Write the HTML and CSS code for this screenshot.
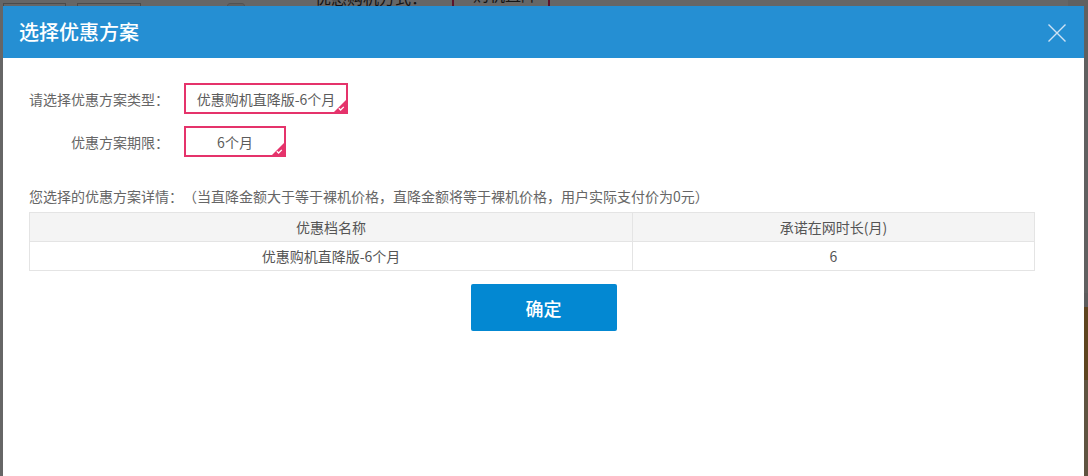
FILE: index.html
```html
<!DOCTYPE html>
<html lang="zh-CN">
<head>
<meta charset="utf-8">
<title>选择优惠方案</title>
<link rel="stylesheet" href="styles.css">
</head>
<body>
<div class="page">
  <div class="page-main">
    <div class="page-top">
      <div class="pg-box pg-box1"></div>
      <div class="pg-box pg-box2"></div>
      <div class="pg-chip"></div>
      <div class="pg-label">优惠购机方式：</div>
      <div class="pg-select">购机直降</div>
    </div>
  </div>
  <div class="page-side">
    <div class="side-gray"></div>
    <div class="side-orange"></div>
    <div class="side-sand"></div>
  </div>
</div>
<div class="mask"></div>
<div class="dialog">
  <div class="dialog-head">
    <h1 class="dialog-title">选择优惠方案</h1>
    <span class="dialog-close" aria-label="关闭">
      <svg width="18" height="18" viewBox="0 0 18 18"><path d="M0.5 0.5 L17.5 17.5 M17.5 0.5 L0.5 17.5" stroke="#cfe3f4" stroke-width="1.4" fill="none"/></svg>
    </span>
  </div>
  <div class="dialog-body">
    <div class="form-row">
      <div class="form-label">请选择优惠方案类型：</div>
      <div class="select select-wide">优惠购机直降版-6个月
        <svg class="select-corner" width="12" height="12" viewBox="0 0 12 12"><polygon points="12,0 12,12 0,12" fill="#e5336b"/><polyline points="4.8,8.3 6.6,10 9.8,6.9" stroke="#fff" stroke-width="1.3" fill="none"/></svg>
      </div>
    </div>
    <div class="form-row">
      <div class="form-label">优惠方案期限：</div>
      <div class="select select-narrow">6个月
        <svg class="select-corner" width="12" height="12" viewBox="0 0 12 12"><polygon points="12,0 12,12 0,12" fill="#e5336b"/><polyline points="4.8,8.3 6.6,10 9.8,6.9" stroke="#fff" stroke-width="1.3" fill="none"/></svg>
      </div>
    </div>
    <p class="note">您选择的优惠方案详情：（当直降金额大于等于裸机价格，直降金额将等于裸机价格，用户实际支付价为0元）</p>
    <table class="detail">
      <thead>
        <tr><th class="col-name">优惠档名称</th><th>承诺在网时长(月)</th></tr>
      </thead>
      <tbody>
        <tr><td>优惠购机直降版-6个月</td><td>6</td></tr>
      </tbody>
    </table>
    <div class="actions">
      <button class="btn-ok" type="button">确定</button>
    </div>
  </div>
</div>
</body>
</html>
```
FILE: styles.css
```css
html, body {
  margin: 0;
  padding: 0;
  height: 476px;
  overflow: hidden;
}
body {
  background: #fff;
  font-family: "Noto Sans CJK SC", "Liberation Sans", sans-serif;
  text-spacing-trim: space-all;
}
.page {
  display: flex;
  height: 476px;
}
.page-main {
  flex: 1;
}
.page-top {
  display: flex;
  align-items: flex-start;
  height: 40px;
}
.pg-box {
  margin-top: 3px;
  height: 30px;
  border: 1px solid #bbb;
  box-sizing: border-box;
}
.pg-box1 {
  margin-left: 3px;
  width: 63px;
}
.pg-box2 {
  margin-left: 11px;
  width: 64px;
}
.pg-chip {
  margin-left: 86px;
  margin-top: 3px;
  width: 18px;
  height: 20px;
  border-radius: 3px;
  background: #eee;
  border: 1px solid #ccc;
  box-sizing: border-box;
}
.pg-label {
  margin-left: 70px;
  margin-top: -13px;
  font-size: 16px;
  line-height: 20px;
  color: #333;
}
.pg-select {
  margin-left: 25px;
  margin-top: -18px;
  width: 98px;
  height: 26px;
  border: 2px solid #e5336b;
  box-sizing: border-box;
  font-size: 16px;
  line-height: 20px;
  color: #333;
  padding-left: 19px;
}
.page-side {
  width: 20px;
  display: flex;
  flex-direction: column;
}
.side-gray {
  height: 307px;
  background: linear-gradient(#f0f0f0 0, #f0f0f0 293px, #e6e6e6 293px);
}
.side-orange {
  height: 73px;
  background: #ecab4f;
}
.side-sand {
  flex: 1;
  background: #eed0a0;
}
.mask {
  position: fixed;
  inset: 0;
  background: rgba(0, 0, 0, 0.6);
}
.dialog {
  position: fixed;
  left: 3px;
  top: 6px;
  width: 1081px;
  bottom: -20px;
  background: #fff;
}
.dialog-head {
  height: 52px;
  background: #258fd3;
  display: flex;
  align-items: center;
  justify-content: space-between;
  padding: 0 18px 0 16px;
}
.dialog-title {
  margin: 0;
  font-size: 20px;
  font-weight: 500;
  color: #fff;
  line-height: 28px;
}
.dialog-close {
  display: flex;
  width: 18px;
  height: 18px;
  margin-top: 2px;
}
.dialog-body {
  padding: 25px 0 0 26px;
}
.form-row {
  display: flex;
  align-items: center;
  gap: 15px;
  margin-bottom: 12px;
}
.form-label {
  width: 140px;
  text-align: right;
  font-size: 14px;
  color: #666;
  white-space: nowrap;
}
.select {
  position: relative;
  height: 31px;
  box-sizing: border-box;
  border: 2px solid #e5336b;
  display: flex;
  align-items: center;
  justify-content: center;
  font-size: 14px;
  color: #5c5c5c;
}
.select-wide {
  width: 164px;
}
.select-narrow {
  width: 102px;
}
.select-corner {
  position: absolute;
  right: 0;
  bottom: 0;
}
.note {
  margin: 29px 0 6px;
  font-size: 14px;
  line-height: 20px;
  color: #666;
}
.detail {
  width: 1006px;
  border-collapse: collapse;
  font-size: 14px;
  color: #555;
}
.detail th,
.detail td {
  border: 1px solid #e4e4e4;
  height: 28px;
  padding: 0;
  text-align: center;
  font-weight: normal;
}
.detail th {
  background: #f4f4f4;
}
.col-name {
  width: 602px;
}
.actions {
  display: flex;
  justify-content: center;
  padding-right: 26px;
  margin-top: 13px;
}
.btn-ok {
  width: 146px;
  height: 47px;
  border: 0;
  border-radius: 2px;
  background: #0388d2;
  color: #fff;
  font-family: "Noto Sans CJK SC", sans-serif;
  font-size: 18px;
  font-weight: 500;
}
```
